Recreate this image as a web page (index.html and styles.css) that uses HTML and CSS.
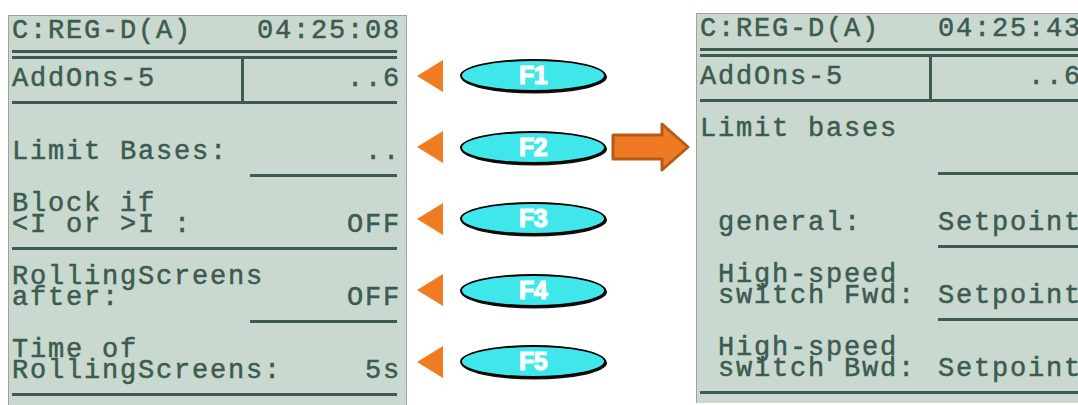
FILE: index.html
```html
<!DOCTYPE html>
<html lang="en">
<head>
    <meta charset="UTF-8">
    <title>AddOns-5 - Limit Bases</title>
    <link rel="stylesheet" href="styles.css">
</head>
<body>
    <div class="page">
        <!-- screen before pressing F2 -->
        <div class="lcd">
            <div class="lcd-head"><span>C:REG-D(A)</span><span class="val">04:25:08</span></div>
            <div class="dbl"></div>
            <div class="menu-row">
                <div class="menu-name">AddOns-5</div>
                <div class="menu-page"><span class="val">..6</span></div>
            </div>
            <div class="field">
                <div class="ln"></div>
                <div class="ln"><span>Limit Bases:</span><span class="val">..</span></div>
            </div>
            <div class="rule short"></div>
            <div class="field">
                <div class="ln"><span>Block if</span></div>
                <div class="ln"><span>&lt;I or &gt;I :</span><span class="val">OFF</span></div>
            </div>
            <div class="rule"></div>
            <div class="field">
                <div class="ln"><span>RollingScreens</span></div>
                <div class="ln"><span>after:</span><span class="val">OFF</span></div>
            </div>
            <div class="rule short"></div>
            <div class="field">
                <div class="ln"><span>Time of</span></div>
                <div class="ln"><span>RollingScreens:</span><span class="val">5s</span></div>
            </div>
            <div class="rule"></div>
        </div>

        <!-- function keys -->
        <div class="keys">
            <div class="key-row"><div class="tri"></div><div class="fkey">F1</div></div>
            <div class="key-row">
                <div class="tri"></div><div class="fkey">F2</div>
                <svg class="next" width="80" height="50" viewBox="0 0 80 50">
                    <polygon points="2,13 51,13 51,2 77,25 51,48 51,37 2,37" fill="#ee7b22" stroke="#b65a18" stroke-width="3" stroke-linejoin="round"/>
                </svg>
            </div>
            <div class="key-row"><div class="tri"></div><div class="fkey">F3</div></div>
            <div class="key-row"><div class="tri"></div><div class="fkey">F4</div></div>
            <div class="key-row"><div class="tri"></div><div class="fkey">F5</div></div>
        </div>

        <!-- screen after pressing F2 -->
        <div class="lcd lcd-sub">
            <div class="lcd-head"><span>C:REG-D(A)</span><span class="val">04:25:43</span></div>
            <div class="dbl"></div>
            <div class="menu-row">
                <div class="menu-name">AddOns-5</div>
                <div class="menu-page"><span class="val">..6</span></div>
            </div>
            <div class="field">
                <div class="ln"><span>Limit bases</span></div>
                <div class="ln"></div>
            </div>
            <div class="rule short"></div>
            <div class="field">
                <div class="ln"></div>
                <div class="ln"><span class="ind">general:</span><span class="val">Setpoint</span></div>
            </div>
            <div class="rule short"></div>
            <div class="field">
                <div class="ln"><span class="ind">High-speed</span></div>
                <div class="ln"><span class="ind">switch Fwd:</span><span class="val">Setpoint</span></div>
            </div>
            <div class="rule short"></div>
            <div class="field">
                <div class="ln"><span class="ind">High-speed</span></div>
                <div class="ln"><span class="ind">switch Bwd:</span><span class="val">Setpoint</span></div>
            </div>
            <div class="rule"></div>
        </div>
    </div>
</body>
</html>
```

FILE: styles.css
```css
body {
    margin: 0;
    background: #fff;
    overflow: hidden;
    font-family: "Liberation Mono", monospace;
}
.page {
    display: flex;
    align-items: flex-start;
    width: max-content;
    padding-left: 8px;
}
.lcd {
    flex: none;
    width: 399px;
    height: 390px;
    box-sizing: border-box;
    margin-top: 15px;
    padding: 5px 9px 0 3px;
    background: #c9d9d0;
    border: 1px solid #9ea3a0;
    border-bottom: 0;
    color: #3d5b50;
    font-size: 27px;
    letter-spacing: 1.8px;
    line-height: 21px;
    -webkit-text-stroke: 0.5px #3d5b50;
}
.lcd-sub {
    width: 392px;
    margin-top: 13px;
}
.lcd-head {
    display: flex;
    justify-content: space-between;
    height: 21px;
}
.dbl {
    margin-top: 8px;
    height: 3px;
    border-top: 3px solid;
    border-bottom: 3px solid;
}
.menu-row {
    display: flex;
    height: 42px;
    border-bottom: 3px solid;
}
.menu-name {
    flex: none;
    width: 232px;
    box-sizing: border-box;
    border-right: 3px solid;
    padding-top: 10px;
}
.menu-page {
    flex: 1;
    text-align: right;
    padding-top: 10px;
}
.val {
    margin-right: -4px;
}
.field {
    height: 70px;
    box-sizing: border-box;
    padding-top: 17px;
}
.ln {
    display: flex;
    justify-content: space-between;
    height: 21px;
    white-space: pre;
}
.ind {
    padding-left: 18px;
}
.rule {
    height: 3px;
    background: currentColor;
}
.rule.short {
    margin-left: 238px;
}
.keys {
    flex: none;
    width: 289px;
    box-sizing: border-box;
    padding: 40px 0 0 10px;
}
.key-row {
    display: flex;
    align-items: center;
    height: 71.5px;
}
.tri {
    width: 0;
    height: 0;
    border-right: 26px solid #f07c21;
    border-top: 16px solid transparent;
    border-bottom: 16px solid transparent;
}
.fkey {
    margin-left: 17px;
    width: 146px;
    height: 33px;
    box-sizing: border-box;
    border: 2px solid #000;
    border-radius: 50%;
    background: #3fe6ea;
    box-shadow: 1px 1.5px 0 #111;
    display: flex;
    align-items: center;
    justify-content: center;
    color: #fff;
    font: bold 25px "Liberation Sans", sans-serif;
    -webkit-text-stroke: 1.2px #fff;
    letter-spacing: -0.5px;
}
.next {
    margin-left: 5px;
}
```
